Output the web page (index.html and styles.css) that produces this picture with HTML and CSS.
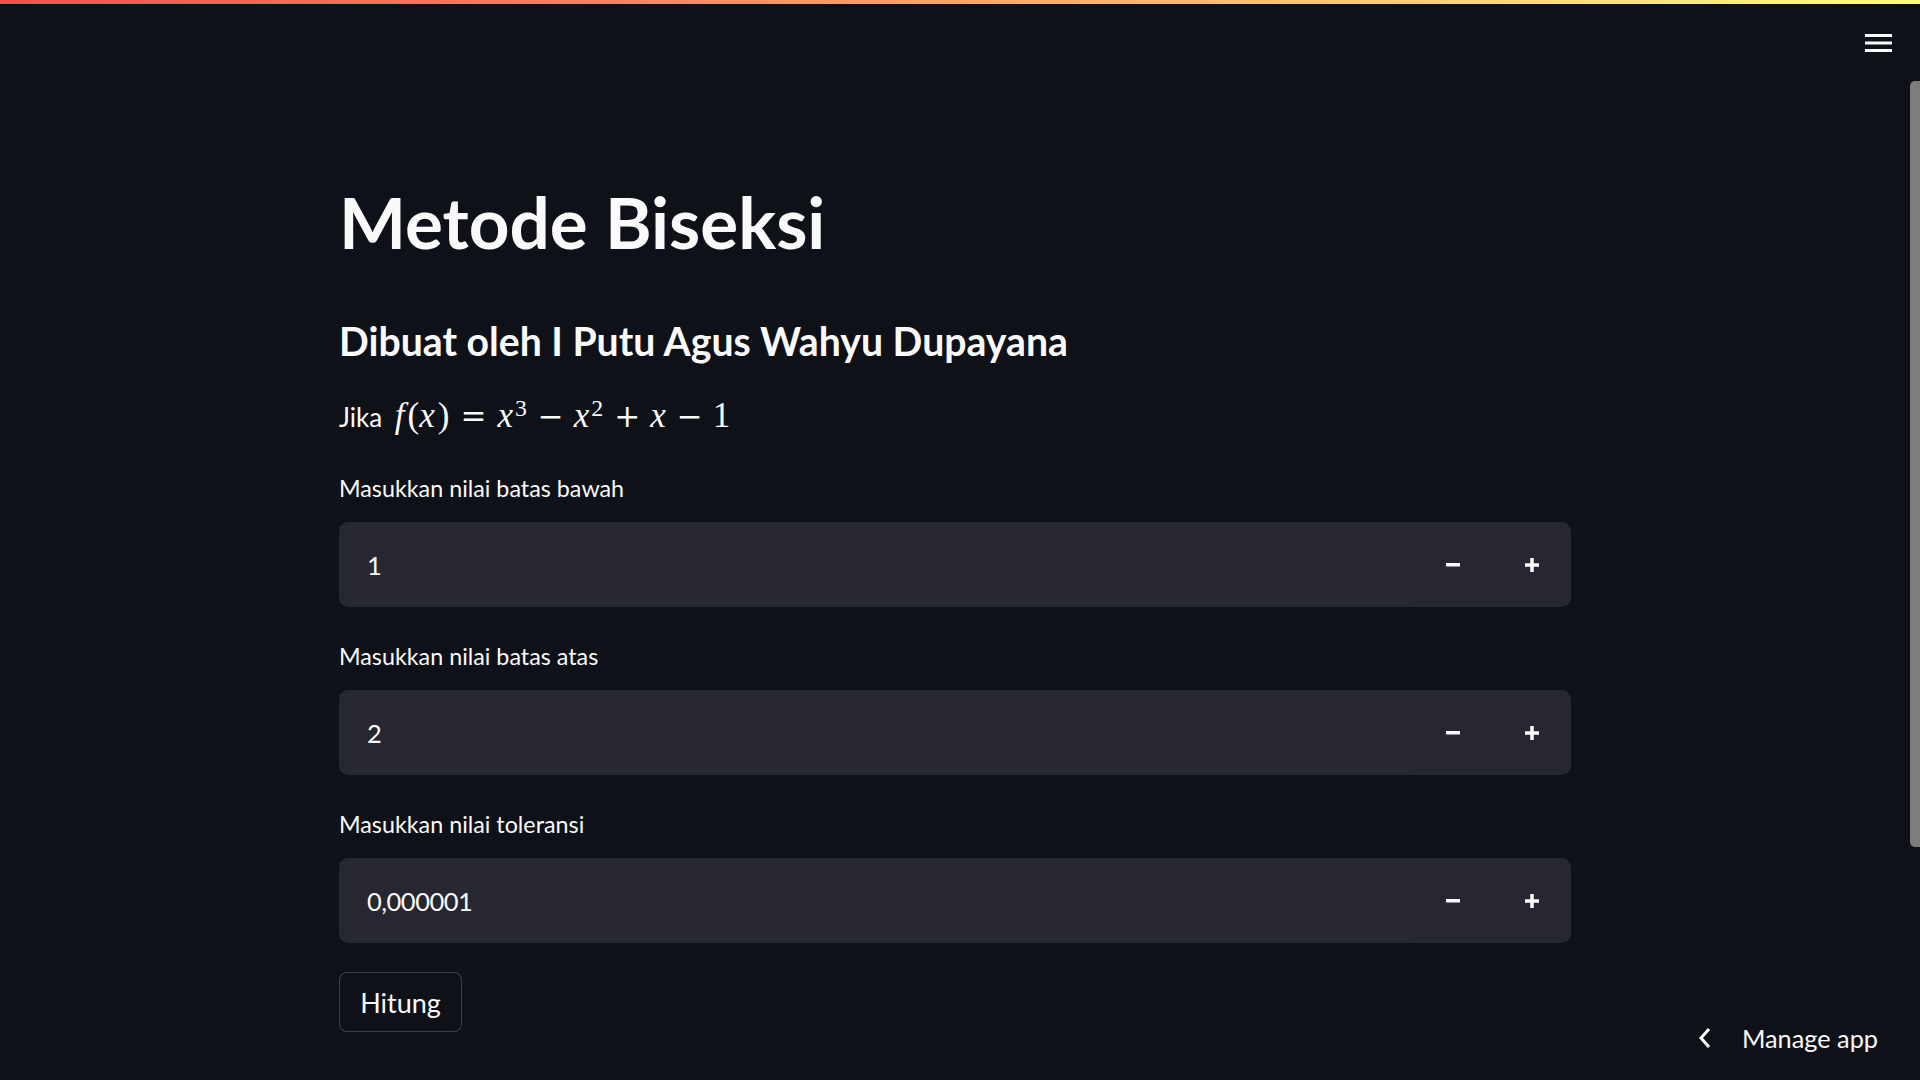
FILE: index.html
```html
<!DOCTYPE html>
<html lang="id">
<head>
<meta charset="utf-8">
<title>Metode Biseksi</title>
<link rel="stylesheet" href="styles.css">
</head>
<body>
<div class="decoration"></div>
<button class="menu-btn" aria-label="Menu">
  <svg width="28" height="20" viewBox="0 0 28 20"><rect x="0" y="1" width="27" height="3" fill="#fafafa"/><rect x="0" y="8.5" width="27" height="3" fill="#fafafa"/><rect x="0" y="16" width="27" height="3" fill="#fafafa"/></svg>
</button>
<div class="scroll-thumb"></div>
<div class="app">
  <main class="block">
    <h1 class="title">Metode Biseksi</h1>
    <h3 class="subheader">Dibuat oleh I Putu Agus Wahyu Dupayana</h3>
    <p class="text">Jika <span class="math"><i>f</i><span class="paren">(</span><i>x</i><span class="paren">)</span><span class="rel">=</span><i>x</i><sup>3</sup><span class="bin">−</span><i>x</i><sup>2</sup><span class="bin">+</span><i>x</i><span class="bin">−</span>1</span></p>

    <div class="widget">
      <label class="label">Masukkan nilai batas bawah</label>
      <div class="number-input">
        <div class="field">1</div>
        <div class="step"><svg width="14" height="4" viewBox="0 0 14 4"><rect width="14" height="3.5" fill="#fafafa"/></svg></div>
        <div class="step"><svg width="14" height="14" viewBox="0 0 14 14"><rect y="5.25" width="14" height="3.5" fill="#fafafa"/><rect x="5.25" width="3.5" height="14" fill="#fafafa"/></svg></div>
      </div>
    </div>

    <div class="widget">
      <label class="label">Masukkan nilai batas atas</label>
      <div class="number-input">
        <div class="field">2</div>
        <div class="step"><svg width="14" height="4" viewBox="0 0 14 4"><rect width="14" height="3.5" fill="#fafafa"/></svg></div>
        <div class="step"><svg width="14" height="14" viewBox="0 0 14 14"><rect y="5.25" width="14" height="3.5" fill="#fafafa"/><rect x="5.25" width="3.5" height="14" fill="#fafafa"/></svg></div>
      </div>
    </div>

    <div class="widget">
      <label class="label">Masukkan nilai toleransi</label>
      <div class="number-input">
        <div class="field">0,000001</div>
        <div class="step"><svg width="14" height="4" viewBox="0 0 14 4"><rect width="14" height="3.5" fill="#fafafa"/></svg></div>
        <div class="step"><svg width="14" height="14" viewBox="0 0 14 14"><rect y="5.25" width="14" height="3.5" fill="#fafafa"/><rect x="5.25" width="3.5" height="14" fill="#fafafa"/></svg></div>
      </div>
    </div>

    <button class="btn">Hitung</button>
  </main>
</div>
<div class="manage">
  <svg width="14" height="22" viewBox="0 0 14 22"><path d="M11 2 L3 11 L11 20" fill="none" stroke="#fafafa" stroke-width="3"/></svg>
  <span>Manage app</span>
</div>
</body>
</html>
```
FILE: styles.css
```css
html, body {
  margin: 0;
  padding: 0;
  background: #0e1117;
  color: #fafafa;
  font-family: Lato, "Noto Sans", sans-serif;
  height: 1080px;
  overflow: hidden;
}

.decoration {
  height: 4px;
  background: linear-gradient(90deg, #ff4b4b, #fffd80);
}

.menu-btn {
  position: absolute;
  top: 33px;
  right: 27px;
  padding: 0;
  margin: 0;
  border: 0;
  background: none;
  line-height: 0;
}

.scroll-thumb {
  position: absolute;
  right: 0;
  top: 81px;
  width: 10px;
  height: 766px;
  background: #7d7d7d;
  border-radius: 5px 0 0 5px;
}

.app {
  padding-right: 10px;
}

.block {
  width: 1232px;
  margin: 0 auto;
  padding-top: 173px;
}

.title {
  margin: 0;
  font-size: 71px;
  font-weight: 700;
  line-height: 90px;
  height: 90px;
}

.subheader {
  margin: 49px 0 0;
  font-size: 39.2px;
  font-weight: 700;
  line-height: 50px;
  height: 50px;
}

.text {
  margin: 29px 0 0;
  font-size: 26px;
  line-height: 44px;
  height: 44px;
}

.math {
  font-family: "Liberation Serif", "DejaVu Serif", serif;
  font-size: 35px;
  line-height: 1;
  margin-left: 6px;
}

.math i {
  font-style: italic;
}

.math .paren {
  display: inline-block;
  margin: 0 2px 0 4px;
}

.math i + .paren {
  margin: 0 0 0 3px;
}

.math sup {
  font-size: 0.68em;
  line-height: 0;
  vertical-align: 0.48em;
  margin-left: 2px;
}

.math .rel,
.math .bin {
  font-family: "DejaVu Serif", serif;
  font-size: 31px;
}

.math .rel {
  margin: 0 11px;
}

.math .bin {
  margin: 0 10px 0 11px;
}

.widget {
  margin-top: 34px;
}

.widget + .widget {
  margin-top: 34px;
}

.label {
  display: block;
  font-size: 23.3px;
  line-height: 30px;
  height: 30px;
}

.number-input {
  margin-top: 19px;
  height: 85px;
  box-sizing: border-box;
  background: #262730;
  border: 1px solid #262730;
  border-radius: 9px;
  display: flex;
  align-items: stretch;
}

.field {
  flex: 1;
  display: flex;
  align-items: center;
  padding-left: 27px;
  font-size: 25.5px;
  letter-spacing: -0.5px;
  margin: 3px 0;
  border-top: 1px solid #2b2c36;
  border-bottom: 1px solid #2b2c36;
}

.step {
  width: 79px;
  box-sizing: border-box;
  padding-left: 3px;
  display: flex;
  align-items: center;
  justify-content: center;
}

.btn {
  display: block;
  margin-top: 29px;
  width: 123px;
  height: 60px;
  box-sizing: border-box;
  background: #0e1117;
  color: #fafafa;
  border: 1px solid rgba(250, 250, 250, 0.2);
  border-radius: 8px;
  font-family: Lato, "Noto Sans", sans-serif;
  font-size: 27px;
  padding: 0;
}

.manage {
  position: absolute;
  right: 42px;
  bottom: 27px;
  display: flex;
  align-items: center;
  gap: 30px;
  font-size: 25.3px;
}

.manage svg {
  display: block;
}
```
